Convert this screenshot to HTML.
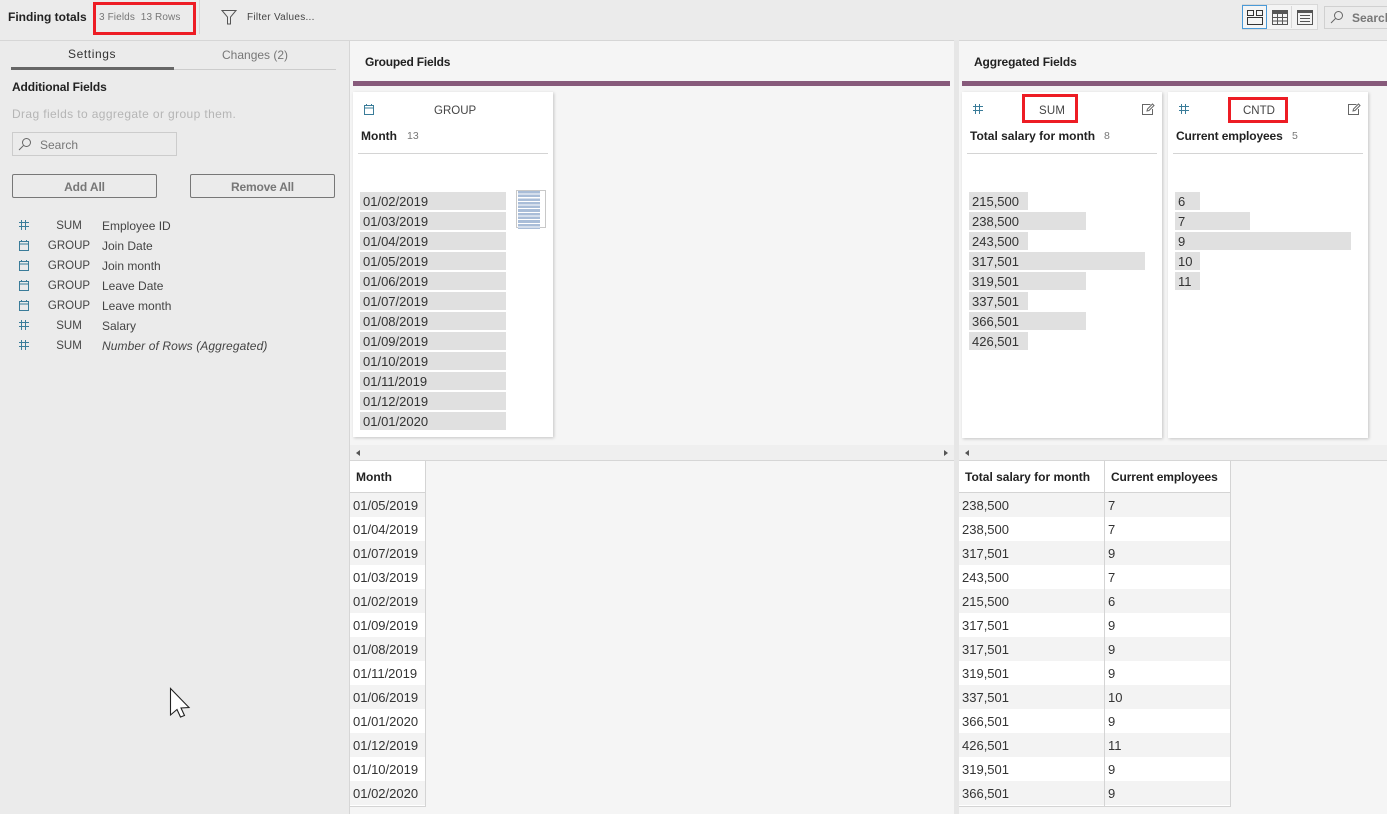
<!DOCTYPE html>
<html><head><meta charset="utf-8">
<style>
html,body{margin:0;padding:0}
body{width:1387px;height:814px;overflow:hidden;position:relative;background:#ebebeb;font-family:"Liberation Sans",sans-serif;font-size:13px;color:#333}
div,span.a,svg{position:absolute}
.t{white-space:nowrap;line-height:16px;height:16px}
.b{font-weight:bold;color:#222}
.bar{background:#e0e0e0;height:18px;line-height:19px;white-space:nowrap;padding-left:3px;box-sizing:border-box;color:#333}
.card{background:#fff;box-shadow:1px 1px 3px rgba(0,0,0,.2)}
.red{border:3px solid #ed1c24;box-sizing:border-box}
.row{left:0;height:24px;line-height:25px;padding-left:3px;box-sizing:border-box;white-space:nowrap}
.g{color:#777}
.lb{font-size:11.5px;color:#444}
.ln{font-size:12px;color:#444}
.cal{fill:none;stroke:#3a7c99}
</style></head><body>

<!-- top bar -->
<div style="left:0;top:40px;width:1387px;height:1px;background:#d6d6d6"></div>
<div style="left:199px;top:0;width:1px;height:34px;background:#d6d6d6"></div>
<div class="t" style="left:8px;top:9px;font-size:12px;font-weight:bold;color:#222">Finding totals</div>
<div class="t g" style="left:99px;top:10px;font-size:10px;letter-spacing:.12px">3 Fields&nbsp;&nbsp;13 Rows</div>
<div class="red" style="left:93px;top:2px;width:103px;height:33px"></div>
<svg style="left:221px;top:9px" width="16" height="16" viewBox="0 0 16 16" fill="none" stroke="#555"><path d="M1 1.500h14L9.500 8v7h-3V8z"/></svg>
<div class="t" style="left:247px;top:10px;font-size:10px;color:#444;letter-spacing:.28px">Filter Values...</div>

<div style="left:1242px;top:4px;width:76px;height:26px;background:#f4f4f4;border:1px solid #d8d8d8;box-sizing:border-box"></div>
<div style="left:1242px;top:5px;width:25px;height:24px;border:1px solid #4a9ad8;box-sizing:border-box;background:#f5f5f5"></div>
<svg style="left:1246px;top:9px" width="18" height="17" viewBox="0 0 18 17" fill="none" stroke="#333"><path d="M1.500 1.500h6v5h-6zM10.500 1.500h6v5h-6zM1.500 8.500h15v7h-15z"/></svg>
<svg style="left:1271px;top:9px" width="18" height="17" viewBox="0 0 18 17" fill="none" stroke="#555"><rect x="1.500" y="1.500" width="15" height="14"/><path d="M1.500 2.500h15M1.500 3.500h15M1.500 4.500h15M1.500 8.500h15M1.500 12h15M6.500 5v10M11.500 5v10"/></svg>
<div style="left:1291px;top:6px;width:1px;height:22px;background:#d8d8d8"></div>
<svg style="left:1296px;top:9px" width="18" height="17" viewBox="0 0 18 17" fill="none" stroke="#555"><rect x="1.500" y="1.500" width="15" height="14"/><path d="M1.500 2.500h15M1.500 3.500h15M4 6.500h10M4 9.500h10M4 12.500h10"/></svg>
<div style="left:1324px;top:6px;width:70px;height:23px;border:1px solid #d0d0d0;box-sizing:border-box"></div>
<svg style="left:1330px;top:10px" width="14" height="14" viewBox="0 0 14 14" fill="none" stroke="#666"><circle cx="8.500" cy="5.500" r="4"/><path d="M5.500 8.500L1 13"/></svg>
<div class="t b" style="left:1352px;top:10px;font-size:12px;color:#777">Search</div>

<!-- left panel -->
<div class="t" style="left:68px;top:46px;font-size:12px;color:#333;letter-spacing:.6px">Settings</div>
<div class="t g" style="left:222px;top:47px;font-size:12px">Changes (2)</div>
<div style="left:11px;top:69px;width:325px;height:1px;background:#ccc"></div>
<div style="left:11px;top:67px;width:163px;height:3px;background:#666"></div>
<div class="t b" style="left:12px;top:79px;font-size:12px;letter-spacing:-.12px">Additional Fields</div>
<div class="t" style="left:12px;top:106px;font-size:12px;color:#b5b5b5;letter-spacing:.38px">Drag fields to aggregate or group them.</div>
<div style="left:12px;top:132px;width:165px;height:24px;border:1px solid #ccc;box-sizing:border-box"></div>
<svg style="left:18px;top:137px" width="14" height="14" viewBox="0 0 14 14" fill="none" stroke="#666"><circle cx="8.500" cy="5.500" r="4"/><path d="M5.500 8.500L1 13"/></svg>
<div class="t" style="left:40px;top:137px;font-size:12px;color:#777">Search</div>
<div style="left:12px;top:174px;width:145px;height:24px;border:1px solid #777;border-radius:2px;box-sizing:border-box;text-align:center;line-height:24px;font-size:12px;font-weight:bold;color:#777;letter-spacing:-.1px">Add All</div>
<div style="left:190px;top:174px;width:145px;height:24px;border:1px solid #777;border-radius:2px;box-sizing:border-box;text-align:center;line-height:24px;font-size:12px;font-weight:bold;color:#777;letter-spacing:-.2px">Remove All</div>

<!-- field list -->
<svg style="left:18px;top:219px" width="12" height="12" viewBox="0 0 12 12" class="cal"><path d="M3.500 1v10M7.500 1v10M1 3.500h10M1 7.500h10"/></svg>
<div class="t lb" style="left:39px;top:218px;width:60px;text-align:center">SUM</div><div class="t ln" style="left:102px;top:218px">Employee ID</div>
<svg style="left:18px;top:239px" width="12" height="13" viewBox="0 0 12 13" class="cal"><path d="M1.500 2.500h9v9h-9zM1.500 5h9M3.500 1v2M8.500 1v2"/></svg>
<div class="t lb" style="left:39px;top:238px;width:60px;text-align:center">GROUP</div><div class="t ln" style="left:102px;top:238px">Join Date</div>
<svg style="left:18px;top:259px" width="12" height="13" viewBox="0 0 12 13" class="cal"><path d="M1.500 2.500h9v9h-9zM1.500 5h9M3.500 1v2M8.500 1v2"/></svg>
<div class="t lb" style="left:39px;top:258px;width:60px;text-align:center">GROUP</div><div class="t ln" style="left:102px;top:258px">Join month</div>
<svg style="left:18px;top:279px" width="12" height="13" viewBox="0 0 12 13" class="cal"><path d="M1.500 2.500h9v9h-9zM1.500 5h9M3.500 1v2M8.500 1v2"/></svg>
<div class="t lb" style="left:39px;top:278px;width:60px;text-align:center">GROUP</div><div class="t ln" style="left:102px;top:278px">Leave Date</div>
<svg style="left:18px;top:299px" width="12" height="13" viewBox="0 0 12 13" class="cal"><path d="M1.500 2.500h9v9h-9zM1.500 5h9M3.500 1v2M8.500 1v2"/></svg>
<div class="t lb" style="left:39px;top:298px;width:60px;text-align:center">GROUP</div><div class="t ln" style="left:102px;top:298px">Leave month</div>
<svg style="left:18px;top:319px" width="12" height="12" viewBox="0 0 12 12" class="cal"><path d="M3.500 1v10M7.500 1v10M1 3.500h10M1 7.500h10"/></svg>
<div class="t lb" style="left:39px;top:318px;width:60px;text-align:center">SUM</div><div class="t ln" style="left:102px;top:318px">Salary</div>
<svg style="left:18px;top:339px" width="12" height="12" viewBox="0 0 12 12" class="cal"><path d="M3.500 1v10M7.500 1v10M1 3.500h10M1 7.500h10"/></svg>
<div class="t lb" style="left:39px;top:338px;width:60px;text-align:center">SUM</div><div class="t ln" style="left:102px;top:338px;font-style:italic;letter-spacing:.1px">Number of Rows (Aggregated)</div>

<!-- cursor -->
<svg style="left:168px;top:686px" width="24" height="34" viewBox="0 0 24 34"><path d="M2.500 2.500V29L9 23.500 12.500 31 16.500 29.500 13 22 21 21.500z" fill="#fff" stroke="#222" stroke-width="1.100"/></svg>

<!-- main panels -->
<div style="left:349px;top:40px;width:1px;height:774px;background:#d6d6d6"></div>
<div style="left:350px;top:41px;width:604px;height:773px;background:#f5f5f5"></div>
<div style="left:954px;top:40px;width:5px;height:774px;background:#e6e6e6"></div>
<div style="left:959px;top:41px;width:428px;height:773px;background:#f5f5f5"></div>

<div class="t b" style="left:365px;top:54px;font-size:12px;letter-spacing:-.2px">Grouped Fields</div>
<div class="t b" style="left:974px;top:54px;font-size:12px;letter-spacing:-.12px">Aggregated Fields</div>
<div style="left:353px;top:81px;width:597px;height:5px;background:#875a7b"></div>
<div style="left:962px;top:81px;width:425px;height:5px;background:#875a7b"></div>

<!-- scroll strips -->
<div style="left:350px;top:445px;width:604px;height:15px;background:#efefef"></div>
<div style="left:959px;top:445px;width:428px;height:15px;background:#efefef"></div>
<div style="left:350px;top:460px;width:604px;height:1px;background:#d6d6d6"></div>
<div style="left:959px;top:460px;width:428px;height:1px;background:#d6d6d6"></div>
<svg style="left:355px;top:449px" width="6" height="8" viewBox="0 0 6 8"><path d="M5 1v6L1 4z" fill="#555"/></svg>
<svg style="left:943px;top:449px" width="6" height="8" viewBox="0 0 6 8"><path d="M1 1v6l4-3z" fill="#555"/></svg>
<svg style="left:964px;top:449px" width="6" height="8" viewBox="0 0 6 8"><path d="M5 1v6L1 4z" fill="#555"/></svg>

<!-- Group card -->
<div class="card" style="left:353px;top:92px;width:200px;height:345px"></div>
<svg style="left:363px;top:103px" width="12" height="13" viewBox="0 0 12 13" class="cal"><path d="M1.500 2.500h9v9h-9zM1.500 5h9M3.500 1v2M8.500 1v2"/></svg>
<div class="t lb" style="left:434px;top:103px">GROUP</div>
<div class="t b" style="left:361px;top:128px;font-size:12px">Month</div>
<div class="t g" style="left:407px;top:128px;font-size:10.500px">13</div>
<div style="left:358px;top:153px;width:190px;height:1px;background:#d4d4d4"></div>
<div class="bar" style="left:360px;top:192px;width:146px">01/02/2019</div>
<div class="bar" style="left:360px;top:212px;width:146px">01/03/2019</div>
<div class="bar" style="left:360px;top:232px;width:146px">01/04/2019</div>
<div class="bar" style="left:360px;top:252px;width:146px">01/05/2019</div>
<div class="bar" style="left:360px;top:272px;width:146px">01/06/2019</div>
<div class="bar" style="left:360px;top:292px;width:146px">01/07/2019</div>
<div class="bar" style="left:360px;top:312px;width:146px">01/08/2019</div>
<div class="bar" style="left:360px;top:332px;width:146px">01/09/2019</div>
<div class="bar" style="left:360px;top:352px;width:146px">01/10/2019</div>
<div class="bar" style="left:360px;top:372px;width:146px">01/11/2019</div>
<div class="bar" style="left:360px;top:392px;width:146px">01/12/2019</div>
<div class="bar" style="left:360px;top:412px;width:146px">01/01/2020</div>
<div style="left:516px;top:190px;width:30px;height:38px;border:1px solid #c8c8c8;box-sizing:border-box"></div>
<div style="left:518px;top:191px;width:22px;height:38px;background:repeating-linear-gradient(to bottom,#a9bdd8 0,#a9bdd8 2.600px,#fff 2.600px,#fff 3.650px)"></div>

<!-- SUM card -->
<div class="card" style="left:962px;top:92px;width:200px;height:346px"></div>
<svg style="left:972px;top:103px" width="12" height="12" viewBox="0 0 12 12" class="cal"><path d="M3.500 1v10M7.500 1v10M1 3.500h10M1 7.500h10"/></svg>
<div class="t lb" style="left:1039px;top:103px;letter-spacing:.2px">SUM</div>
<div class="red" style="left:1022px;top:94px;width:56px;height:29px"></div>
<svg style="left:1141px;top:103px" width="14" height="13" viewBox="0 0 14 13" fill="none" stroke="#666"><path d="M9.500 1.500h-8v10h10V6M6 8l.5-2L11.500 1l1.500 1.500L8 7.500z"/></svg>
<div class="t b" style="left:970px;top:128px;font-size:12px">Total salary for month</div>
<div class="t g" style="left:1104px;top:128px;font-size:10.500px">8</div>
<div style="left:967px;top:153px;width:190px;height:1px;background:#d4d4d4"></div>
<div class="bar" style="left:969px;top:192px;width:59px">215,500</div>
<div class="bar" style="left:969px;top:212px;width:117px">238,500</div>
<div class="bar" style="left:969px;top:232px;width:59px">243,500</div>
<div class="bar" style="left:969px;top:252px;width:176px">317,501</div>
<div class="bar" style="left:969px;top:272px;width:117px">319,501</div>
<div class="bar" style="left:969px;top:292px;width:59px">337,501</div>
<div class="bar" style="left:969px;top:312px;width:117px">366,501</div>
<div class="bar" style="left:969px;top:332px;width:59px">426,501</div>

<!-- CNTD card -->
<div class="card" style="left:1168px;top:92px;width:200px;height:346px"></div>
<svg style="left:1178px;top:103px" width="12" height="12" viewBox="0 0 12 12" class="cal"><path d="M3.500 1v10M7.500 1v10M1 3.500h10M1 7.500h10"/></svg>
<div class="t lb" style="left:1243px;top:103px">CNTD</div>
<div class="red" style="left:1228px;top:97px;width:60px;height:26px"></div>
<svg style="left:1347px;top:103px" width="14" height="13" viewBox="0 0 14 13" fill="none" stroke="#666"><path d="M9.500 1.500h-8v10h10V6M6 8l.5-2L11.500 1l1.500 1.500L8 7.500z"/></svg>
<div class="t b" style="left:1176px;top:128px;font-size:12px;letter-spacing:-.12px">Current employees</div>
<div class="t g" style="left:1292px;top:128px;font-size:10.500px">5</div>
<div style="left:1173px;top:153px;width:190px;height:1px;background:#d4d4d4"></div>
<div class="bar" style="left:1175px;top:192px;width:25px">6</div>
<div class="bar" style="left:1175px;top:212px;width:75px">7</div>
<div class="bar" style="left:1175px;top:232px;width:176px">9</div>
<div class="bar" style="left:1175px;top:252px;width:25px">10</div>
<div class="bar" style="left:1175px;top:272px;width:25px">11</div>

<!-- Month table -->
<div style="left:350px;top:461px;width:76px;height:346px;background:#fff;border-right:1px solid #d4d4d4;border-bottom:1px solid #d4d4d4;box-sizing:border-box">
<div class="b" style="left:6px;top:8px;font-size:12px;line-height:16px">Month</div>
<div style="left:0;top:31px;width:75px;height:1px;background:#d4d4d4"></div>
<div class="row" style="top:32px;width:75px;background:#f3f3f3">01/05/2019</div>
<div class="row" style="top:56px;width:75px">01/04/2019</div>
<div class="row" style="top:80px;width:75px;background:#f3f3f3">01/07/2019</div>
<div class="row" style="top:104px;width:75px">01/03/2019</div>
<div class="row" style="top:128px;width:75px;background:#f3f3f3">01/02/2019</div>
<div class="row" style="top:152px;width:75px">01/09/2019</div>
<div class="row" style="top:176px;width:75px;background:#f3f3f3">01/08/2019</div>
<div class="row" style="top:200px;width:75px">01/11/2019</div>
<div class="row" style="top:224px;width:75px;background:#f3f3f3">01/06/2019</div>
<div class="row" style="top:248px;width:75px">01/01/2020</div>
<div class="row" style="top:272px;width:75px;background:#f3f3f3">01/12/2019</div>
<div class="row" style="top:296px;width:75px">01/10/2019</div>
<div class="row" style="top:320px;width:75px;background:#f3f3f3">01/02/2020</div>
</div>

<!-- Aggregated table -->
<div style="left:959px;top:461px;width:272px;height:346px;background:#fff;border-right:1px solid #d4d4d4;border-bottom:1px solid #d4d4d4;box-sizing:border-box">
<div class="t b" style="left:6px;top:8px;font-size:12px">Total salary for month</div>
<div class="t b" style="left:152px;top:8px;font-size:12px;letter-spacing:-.12px">Current employees</div>
<div style="left:0;top:31px;width:271px;height:1px;background:#d4d4d4"></div>
<div class="row" style="top:32px;width:271px;background:#f3f3f3">238,500</div><div class="row" style="left:146px;top:32px">7</div>
<div class="row" style="top:56px;width:271px">238,500</div><div class="row" style="left:146px;top:56px">7</div>
<div class="row" style="top:80px;width:271px;background:#f3f3f3">317,501</div><div class="row" style="left:146px;top:80px">9</div>
<div class="row" style="top:104px;width:271px">243,500</div><div class="row" style="left:146px;top:104px">7</div>
<div class="row" style="top:128px;width:271px;background:#f3f3f3">215,500</div><div class="row" style="left:146px;top:128px">6</div>
<div class="row" style="top:152px;width:271px">317,501</div><div class="row" style="left:146px;top:152px">9</div>
<div class="row" style="top:176px;width:271px;background:#f3f3f3">317,501</div><div class="row" style="left:146px;top:176px">9</div>
<div class="row" style="top:200px;width:271px">319,501</div><div class="row" style="left:146px;top:200px">9</div>
<div class="row" style="top:224px;width:271px;background:#f3f3f3">337,501</div><div class="row" style="left:146px;top:224px">10</div>
<div class="row" style="top:248px;width:271px">366,501</div><div class="row" style="left:146px;top:248px">9</div>
<div class="row" style="top:272px;width:271px;background:#f3f3f3">426,501</div><div class="row" style="left:146px;top:272px">11</div>
<div class="row" style="top:296px;width:271px">319,501</div><div class="row" style="left:146px;top:296px">9</div>
<div class="row" style="top:320px;width:271px;background:#f3f3f3">366,501</div><div class="row" style="left:146px;top:320px">9</div>
<div style="left:145px;top:0;width:1px;height:345px;background:#d4d4d4"></div>
</div>

</body></html>
